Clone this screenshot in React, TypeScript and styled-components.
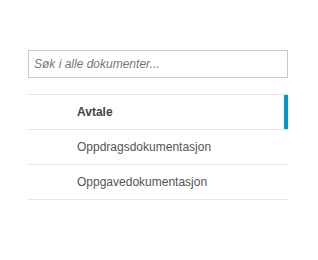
import * as React from 'react'
import styled, { createGlobalStyle } from 'styled-components'

const GlobalStyle = createGlobalStyle`
  body {
    margin: 0;
    background: #ffffff;
    font-family: "Liberation Sans", Arial, sans-serif;
  }
`

const Wrapper = styled.div`
  width: 260px;
  padding: 50px 0 0 28px;
`

const SearchInput = styled.input`
  box-sizing: border-box;
  display: block;
  width: 260px;
  height: 28px;
  margin: 0;
  padding: 0 5px;
  border: 1px solid #c8c8c8;
  border-radius: 0;
  font-family: inherit;
  font-size: 12px;
  color: #333;
  outline: none;

  &::placeholder {
    color: #777;
    font-style: italic;
  }
`

const List = styled.ul`
  list-style: none;
  margin: 16px 0 0;
  padding: 0;
  border-bottom: 1px solid #e6e6e6;
`

const Item = styled.li<{ $active?: boolean }>`
  box-sizing: border-box;
  height: 35px;
  display: flex;
  align-items: center;
  padding-left: 49px;
  border-top: 1px solid #e6e6e6;
  font-size: 12px;
  color: ${p => (p.$active ? '#444' : '#555')};
  font-weight: ${p => (p.$active ? 'bold' : 'normal')};
  box-shadow: ${p => (p.$active ? 'inset -4px 0 0 #0097c9' : 'none')};
  cursor: pointer;
`

const items = ['Avtale', 'Oppdragsdokumentasjon', 'Oppgavedokumentasjon']

const App: React.FC = () => (
  <>
    <GlobalStyle />
    <Wrapper>
      <SearchInput placeholder="Søk i alle dokumenter..." />
      <List>
        {items.map((label, i) => (
          <Item key={label} $active={i === 0}>
            {label}
          </Item>
        ))}
      </List>
    </Wrapper>
  </>
)

export default App
